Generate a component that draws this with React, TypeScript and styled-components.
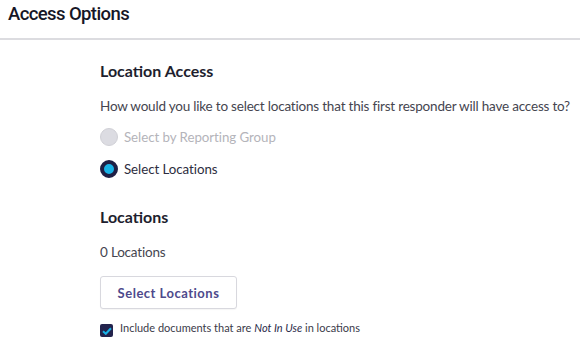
import styled, { createGlobalStyle } from "styled-components";

const GlobalStyle = createGlobalStyle`
  body {
    margin: 0;
    background: #ffffff;
    font-family: Lato, "Open Sans", sans-serif;
    color: #2b2b3a;
  }
`;

const Page = styled.div`
  width: 580px;
  height: 359px;
  overflow: hidden;
`;

const Header = styled.div`
  height: 40px;
  border-bottom: 2px solid #dcdce0;
  padding-left: 8px;
  box-sizing: border-box;
  display: flex;
  align-items: center;

  h1 {
    margin: 0;
    font-family: Roboto, sans-serif;
    font-size: 18.5px;
    font-weight: 500;
    color: #161626;
    letter-spacing: -0.6px;
    margin-top: -11px;
  }
`;

const Body = styled.div`
  padding: 21px 0 0 100px;
`;

const Heading = styled.h2`
  margin: 0;
  font-size: 16px;
  font-weight: 700;
  color: #1e1e2e;
  line-height: 20px;
`;

const Text = styled.p`
  margin: 0;
  font-size: 13.5px;
  color: #45454f;
  line-height: 18px;
  white-space: nowrap;
  letter-spacing: -0.2px;
`;

const RadioRow = styled.label<{ $disabled?: boolean }>`
  display: flex;
  align-items: center;
  gap: 6px;
  height: 20px;
  font-size: 13.3px;
  letter-spacing: -0.05px;
  color: ${(p) => (p.$disabled ? "#b4b4ba" : "#2d2d40")};
`;

const RadioDot = styled.span<{ $checked?: boolean }>`
  width: 18px;
  height: 18px;
  border-radius: 50%;
  box-sizing: border-box;
  background: ${(p) => (p.$checked ? "#19b2e6" : "#dcdce2")};
  border: ${(p) => (p.$checked ? "4px solid #1f1f45" : "1px solid #d0d0d6")};
`;

const Button = styled.button`
  width: 137px;
  height: 33px;
  background: #fff;
  border: 1px solid #d8d8de;
  border-radius: 3px;
  font-family: Lato, sans-serif;
  font-size: 13px;
  font-weight: 700;
  letter-spacing: 0.5px;
  color: #4e4a8c;
  box-shadow: 0 1px 1px rgba(0, 0, 0, 0.04);
`;

const CheckRow = styled.label`
  display: flex;
  align-items: flex-start;
  gap: 7px;
  font-size: 11px;
  color: #3b3b4a;
  line-height: 14px;

  em {
    color: #2b2b4a;
  }
`;

const CheckBox = styled.span`
  width: 13px;
  height: 13px;
  margin-top: 3px;
  border-radius: 2px;
  background: #23234d;
  display: flex;
  align-items: center;
  justify-content: center;
  flex-shrink: 0;
`;

const Spacer = styled.div<{ $h: number }>`
  height: ${(p) => p.$h}px;
`;

export default function App() {
  return (
    <Page>
      <GlobalStyle />
      <Header>
        <h1>Access Options</h1>
      </Header>
      <Body>
        <Heading>Location Access</Heading>
        <Spacer $h={16} />
        <Text>How would you like to select locations that this first responder will have access to?</Text>
        <Spacer $h={12} />
        <RadioRow $disabled>
          <RadioDot />
          Select by Reporting Group
        </RadioRow>
        <Spacer $h={12} />
        <RadioRow>
          <RadioDot $checked />
          Select Locations
        </RadioRow>
        <Spacer $h={28} />
        <Heading>Locations</Heading>
        <Spacer $h={16} />
        <Text>0 Locations</Text>
        <Spacer $h={15} />
        <Button>Select Locations</Button>
        <Spacer $h={12} />
        <CheckRow>
          <CheckBox>
            <svg width="10" height="8" viewBox="0 0 10 8">
              <path d="M1 4.2 L3.8 6.8 L9 1.2" fill="none" stroke="#19b2e6" strokeWidth="2" />
            </svg>
          </CheckBox>
          <span>
            Include documents that are <em>Not In Use</em> in locations
          </span>
        </CheckRow>
      </Body>
    </Page>
  );
}
